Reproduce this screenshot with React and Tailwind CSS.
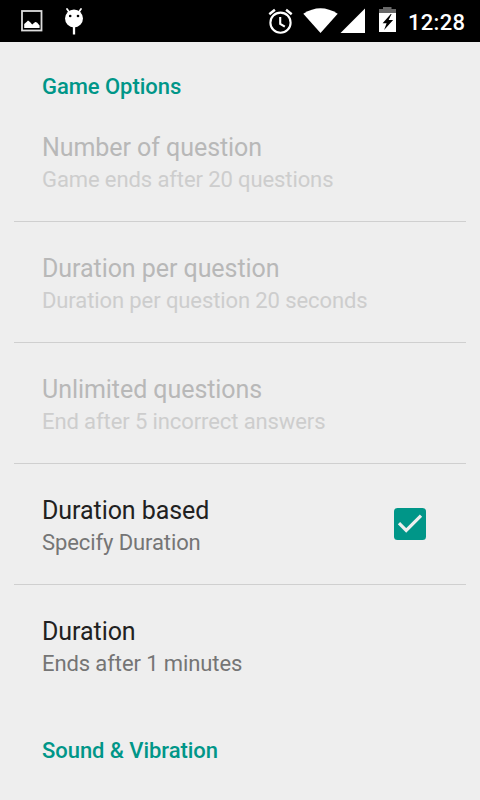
const items = [
  { title: 'Number of question', summary: 'Game ends after 20 questions', disabled: true },
  { title: 'Duration per question', summary: 'Duration per question 20 seconds', disabled: true },
  { title: 'Unlimited questions', summary: 'End after 5 incorrect answers', disabled: true },
  { title: 'Duration based', summary: 'Specify Duration', checked: true },
  { title: 'Duration', summary: 'Ends after 1 minutes', last: true },
];

function PictureIcon() {
  return (
    <svg className="mt-[10px] shrink-0" width="22" height="22" viewBox="0 0 22 22">
      <rect x="1" y="1" width="19.500" height="19.500" fill="none" stroke="#ddd" strokeWidth="1.800" />
      <path fill="#fff" d="M3.200 18v-4l2.300-2 1.500-1.600 2 1.600 2.200 2.500 3-2.500 1.800.5 2.600 3V18z" />
    </svg>
  );
}

function DebugIcon() {
  return (
    <svg className="ml-[21px] mt-[7px] shrink-0" width="20" height="29" viewBox="0 0 20 29">
      <path d="M3 2l2.500 3.500M17 2l-2.500 3.500" stroke="#fff" strokeWidth="1.800" strokeLinecap="round" />
      <circle cx="10" cy="11.500" r="9" fill="#fff" />
      <circle cx="6.200" cy="9" r="1.300" />
      <circle cx="14" cy="9" r="1.300" />
      <path d="M10 20v7.500" stroke="#fff" strokeWidth="2.300" />
    </svg>
  );
}

function AlarmIcon() {
  return (
    <svg className="shrink-0" width="26" height="42" viewBox="268 0 26 42" fill="none" stroke="#fff" strokeWidth="2.100">
      <circle cx="280.500" cy="22.700" r="10.100" />
      <path d="M280.200 17v6.800l4.600 2.800" />
      <path d="M269.300 14.300l5.600-4.600M286.100 9.700l5.600 4.600" strokeWidth="2.400" />
    </svg>
  );
}

function WifiIcon() {
  return (
    <svg className="ml-[9px] shrink-0" width="35" height="42" viewBox="303 0 35 42">
      <path fill="#fff" d="M303.300 13.800q17.200-11 34.400 0L320.500 33z" />
    </svg>
  );
}

function SignalIcon() {
  return (
    <svg className="ml-[2px] shrink-0" width="26" height="42" viewBox="340 0 26 42">
      <path fill="#fff" d="M340.500 33H365V8.500z" />
    </svg>
  );
}

function BatteryIcon() {
  return (
    <svg className="ml-[12px] shrink-0" width="20" height="42" viewBox="378 0 20 42">
      <path fill="#686868" d="M379 13V9h4V7h8.500v2h4.500v4z" />
      <path fill="#fff" d="M379 13h17v19h-17z" />
      <path d="M390.800 14l-8.200 9.200h4l-2.500 6.800 9-10h-4.500l3-6z" />
    </svg>
  );
}

function StatusBar() {
  return (
    <header className="flex h-[42px] items-start bg-black pl-[21px] text-white">
      <PictureIcon />
      <DebugIcon />
      <div className="ml-auto flex pr-[14px]">
        <AlarmIcon />
        <WifiIcon />
        <SignalIcon />
        <BatteryIcon />
        <span className="ml-[10px] w-[58px] whitespace-nowrap pt-[8px] text-[22px] font-medium leading-[30px] tracking-[0.3px]">12:28</span>
      </div>
    </header>
  );
}

function Preference({ title, summary, disabled, checked, last }) {
  return (
    <div className={`mx-3.5 flex h-[121px] items-start justify-between pl-7 pr-10 pt-[30px] ${last ? '' : 'border-b border-[#cfcfcf]'}`}>
      <div className="whitespace-nowrap">
        <div className={`text-[25px] leading-[34px] tracking-[-0.06px] ${disabled ? 'text-[#b8b8b8]' : 'text-[#212121]'}`}>{title}</div>
        <div className={`text-[22px] leading-[30px] tracking-[-0.1px] ${disabled ? 'text-[#cdcdcd]' : 'text-[#757575]'}`}>{summary}</div>
      </div>
      {checked && (
        <svg className="mt-3.5" width="32" height="32" viewBox="0 0 32 32">
          <rect width="32" height="32" rx="3.500" fill="#009688" />
          <path d="M5 15.200l7.200 7.200L27 7.700" fill="none" stroke="#eee" strokeWidth="3.200" />
        </svg>
      )}
    </div>
  );
}

export default function App() {
  return (
    <div className="h-[800px] w-[480px] overflow-hidden bg-[#eeeeee] font-['Roboto',sans-serif]">
      <StatusBar />
      <h2 className="h-[59px] pl-[42px] pt-[30px] text-[22px] font-medium leading-[30px] tracking-[-0.05px] text-[#009688]">Game Options</h2>
      {items.map((item) => <Preference key={item.title} {...item} />)}
      <h2 className="pl-[42px] pt-[30px] text-[22px] font-medium leading-[30px] tracking-[-0.05px] text-[#009688]">Sound &amp; Vibration</h2>
    </div>
  );
}
